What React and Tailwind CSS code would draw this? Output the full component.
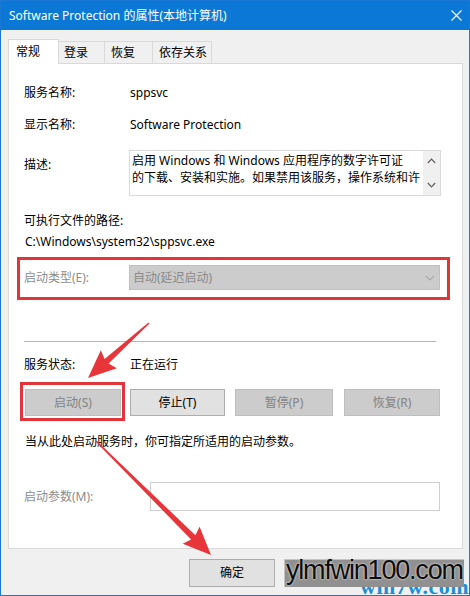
import React from "react";

function arrowPoints(x1, y1, x2, y2, w0 = 1.5, w1 = 6, hl = 25, hw = 12) {
  const dx = x2 - x1;
  const dy = y2 - y1;
  const L = Math.hypot(dx, dy);
  const ux = dx / L;
  const uy = dy / L;
  const nx = -uy;
  const ny = ux;
  const bx = x2 - ux * hl;
  const by = y2 - uy * hl;
  const pts = [
    [x1 + (nx * w0) / 2, y1 + (ny * w0) / 2],
    [bx + (nx * w1) / 2, by + (ny * w1) / 2],
    [bx - ux * 3 + nx * hw, by - uy * 3 + ny * hw],
    [x2, y2],
    [bx - ux * 3 - nx * hw, by - uy * 3 - ny * hw],
    [bx - (nx * w1) / 2, by - (ny * w1) / 2],
    [x1 - (nx * w0) / 2, y1 - (ny * w0) / 2],
  ];
  return pts.map((p) => p[0].toFixed(1) + "," + p[1].toFixed(1)).join(" ");
}

function Btn({ children, disabled, className = "" }) {
  return (
    <div
      className={
        "h-[27px] flex items-center justify-center border " +
        (disabled
          ? "bg-[#cccccc] border-[#bfbfbf] text-[#838383] "
          : "bg-[#e1e1e1] border-[#adadad] text-black ") +
        className
      }
    >
      {children}
    </div>
  );
}

export default function App() {
  return (
    <div className="relative w-[470px] h-[596px] overflow-hidden bg-[#f0f0f0] border border-[#1a78d4] font-['Noto_Sans','Noto_Sans_CJK_SC',sans-serif] text-[12px] leading-[16px] text-black">
      {/* Title bar */}
      <div className="h-[29px] bg-[#0b78d5] flex items-center justify-between pl-[8px] pr-[7px] text-white">
        <span className="text-[12px]">Software Protection 的属性(本地计算机)</span>
        <svg width="11" height="11" viewBox="0 0 11 11" className="mt-[-1px]">
          <path d="M0.5 0.5 L10.5 10.5 M10.5 0.5 L0.5 10.5" stroke="#ffffff" strokeWidth="1.1" fill="none" />
        </svg>
      </div>

      <div className="pt-[9px] pl-[7px]">
        {/* Tabs */}
        <div className="flex items-end h-[24px]">
          <div className="relative z-10 w-[51px] h-[25px] mb-[-1px] bg-white border border-b-0 border-[#d9d9d9] pl-[7px] pt-[4px]">
            常规
          </div>
          <div className="w-[46px] h-[22px] border-t border-r border-[#d9d9d9] bg-[#f0f0f0] pl-[5px] pt-[3px]">
            登录
          </div>
          <div className="w-[48px] h-[22px] border-t border-r border-[#d9d9d9] bg-[#f0f0f0] pl-[6px] pt-[3px]">
            恢复
          </div>
          <div className="w-[59px] h-[22px] border-t border-r border-[#d9d9d9] bg-[#f0f0f0] pl-[6px] pt-[3px]">
            依存关系
          </div>
        </div>

        {/* Panel */}
        <div className="w-[455px] h-[486px] bg-white border border-[#d9d9d9] pl-[15px]">
          <div className="flex mt-[21px]">
            <span className="w-[106px]">服务名称:</span>
            <span>sppsvc</span>
          </div>
          <div className="flex mt-[16px]">
            <span className="w-[106px]">显示名称:</span>
            <span>Software Protection</span>
          </div>
          <div className="flex mt-[17px]">
            <span className="w-[105px] mt-[7px]">描述:</span>
            <div className="w-[312px] h-[46px] border border-[#dadada] flex">
              <div className="flex-1 pl-[2px] pt-[1px] leading-[17px] overflow-hidden whitespace-nowrap">
                <div>启用 Windows 和 Windows 应用程序的数字许可证</div>
                <div>的下载、安装和实施。如果禁用该服务，操作系统和许</div>
              </div>
              <div className="w-[17px] bg-[#f0f0f0] flex flex-col items-center justify-between py-[7px]">
                <svg width="9" height="6" viewBox="0 0 9 6">
                  <path d="M0.8 5 L4.5 1.2 L8.2 5" stroke="#606060" strokeWidth="1.2" fill="none" />
                </svg>
                <svg width="9" height="6" viewBox="0 0 9 6">
                  <path d="M0.8 1 L4.5 4.8 L8.2 1" stroke="#606060" strokeWidth="1.2" fill="none" />
                </svg>
              </div>
            </div>
          </div>
          <div className="mt-[17px]">可执行文件的路径:</div>
          <div className="mt-[5px] pl-[1px]">C:\Windows\system32\sppsvc.exe</div>

          {/* Startup type, highlighted */}
          <div className="ml-[-7px] mt-[7px] w-[433px] h-[43px] border-[3px] border-[#e0363a] pl-[4px] pt-[5px] flex items-start">
            <span className="w-[105px] mt-[5px] text-[#8d8d8d]">启动类型(E):</span>
            <div className="w-[311px] h-[25px] bg-[#cccccc] border border-[#c0c0c0] flex items-center justify-between pl-[3px] pr-[4px] text-[#8a8a8a]">
              <span>自动(延迟启动)</span>
              <svg width="10" height="6" viewBox="0 0 10 6">
                <path d="M0.8 0.8 L5 5 L9.2 0.8" stroke="#a9a9a9" strokeWidth="1.1" fill="none" />
              </svg>
            </div>
          </div>

          <div className="mt-[41px] w-[412px] h-px bg-[#b4b4b4]" />

          <div className="flex mt-[15px]">
            <span className="w-[106px]">服务状态:</span>
            <span>正在运行</span>
          </div>

          <div className="flex mt-[16px] ml-[1px]">
            <div className="relative">
              <Btn disabled className="w-[96px]">启动(S)</Btn>
              <div className="absolute -left-[5px] -top-[7px] -right-[4px] -bottom-[5px] border-[3px] border-[#e0363a]" />
            </div>
            <Btn className="w-[95px] ml-[9px]">停止(T)</Btn>
            <Btn disabled className="w-[98px] ml-[10px]">暂停(P)</Btn>
            <Btn disabled className="w-[96px] ml-[11px]">恢复(R)</Btn>
          </div>

          <div className="mt-[18px] pl-[1px]">当从此处启动服务时，你可指定所适用的启动参数。</div>

          <div className="flex items-center mt-[32px]">
            <span className="w-[126px] text-[#8d8d8d]">启动参数(M):</span>
            <div className="w-[290px] h-[29px] border border-[#cfcfcf] bg-white" />
          </div>
        </div>

        {/* Bottom buttons */}
        <div className="flex mt-[10px] ml-[181px]">
          <div className="w-[86px] h-[28px] bg-[#e1e1e1] border border-[#adadad] flex items-center justify-center">
            确定
          </div>
        </div>
      </div>

      {/* Watermark */}
      <div className="absolute left-[359px] top-[575px] font-['Liberation_Serif',serif] font-bold text-[22px] leading-[22px] text-[#1b8fd6] tracking-[0.5px]">
        win7w.com
      </div>
      <div className="absolute left-[283px] top-[558px] w-[180px] h-[28px] bg-[#909090] border-t border-l border-[#c4c4c4] overflow-visible">
        <div className="absolute left-[1px] top-[-6px] font-['Liberation_Sans',sans-serif] text-[27px] leading-[32px] text-[#0d0d0d] tracking-[-1.2px] [text-shadow:0_0_2px_#d8d8d8,0_0_2px_#d8d8d8]">
          ylmfwin100.com
        </div>
      </div>

      {/* Annotation arrows */}
      <svg className="absolute left-0 top-0 pointer-events-none" width="470" height="596" viewBox="0 0 470 596">
        <polygon points={arrowPoints(148, 322, 87, 377)} fill="#e8353a" />
        <polygon points={arrowPoints(95, 440, 210, 554)} fill="#e8353a" />
      </svg>
    </div>
  );
}
